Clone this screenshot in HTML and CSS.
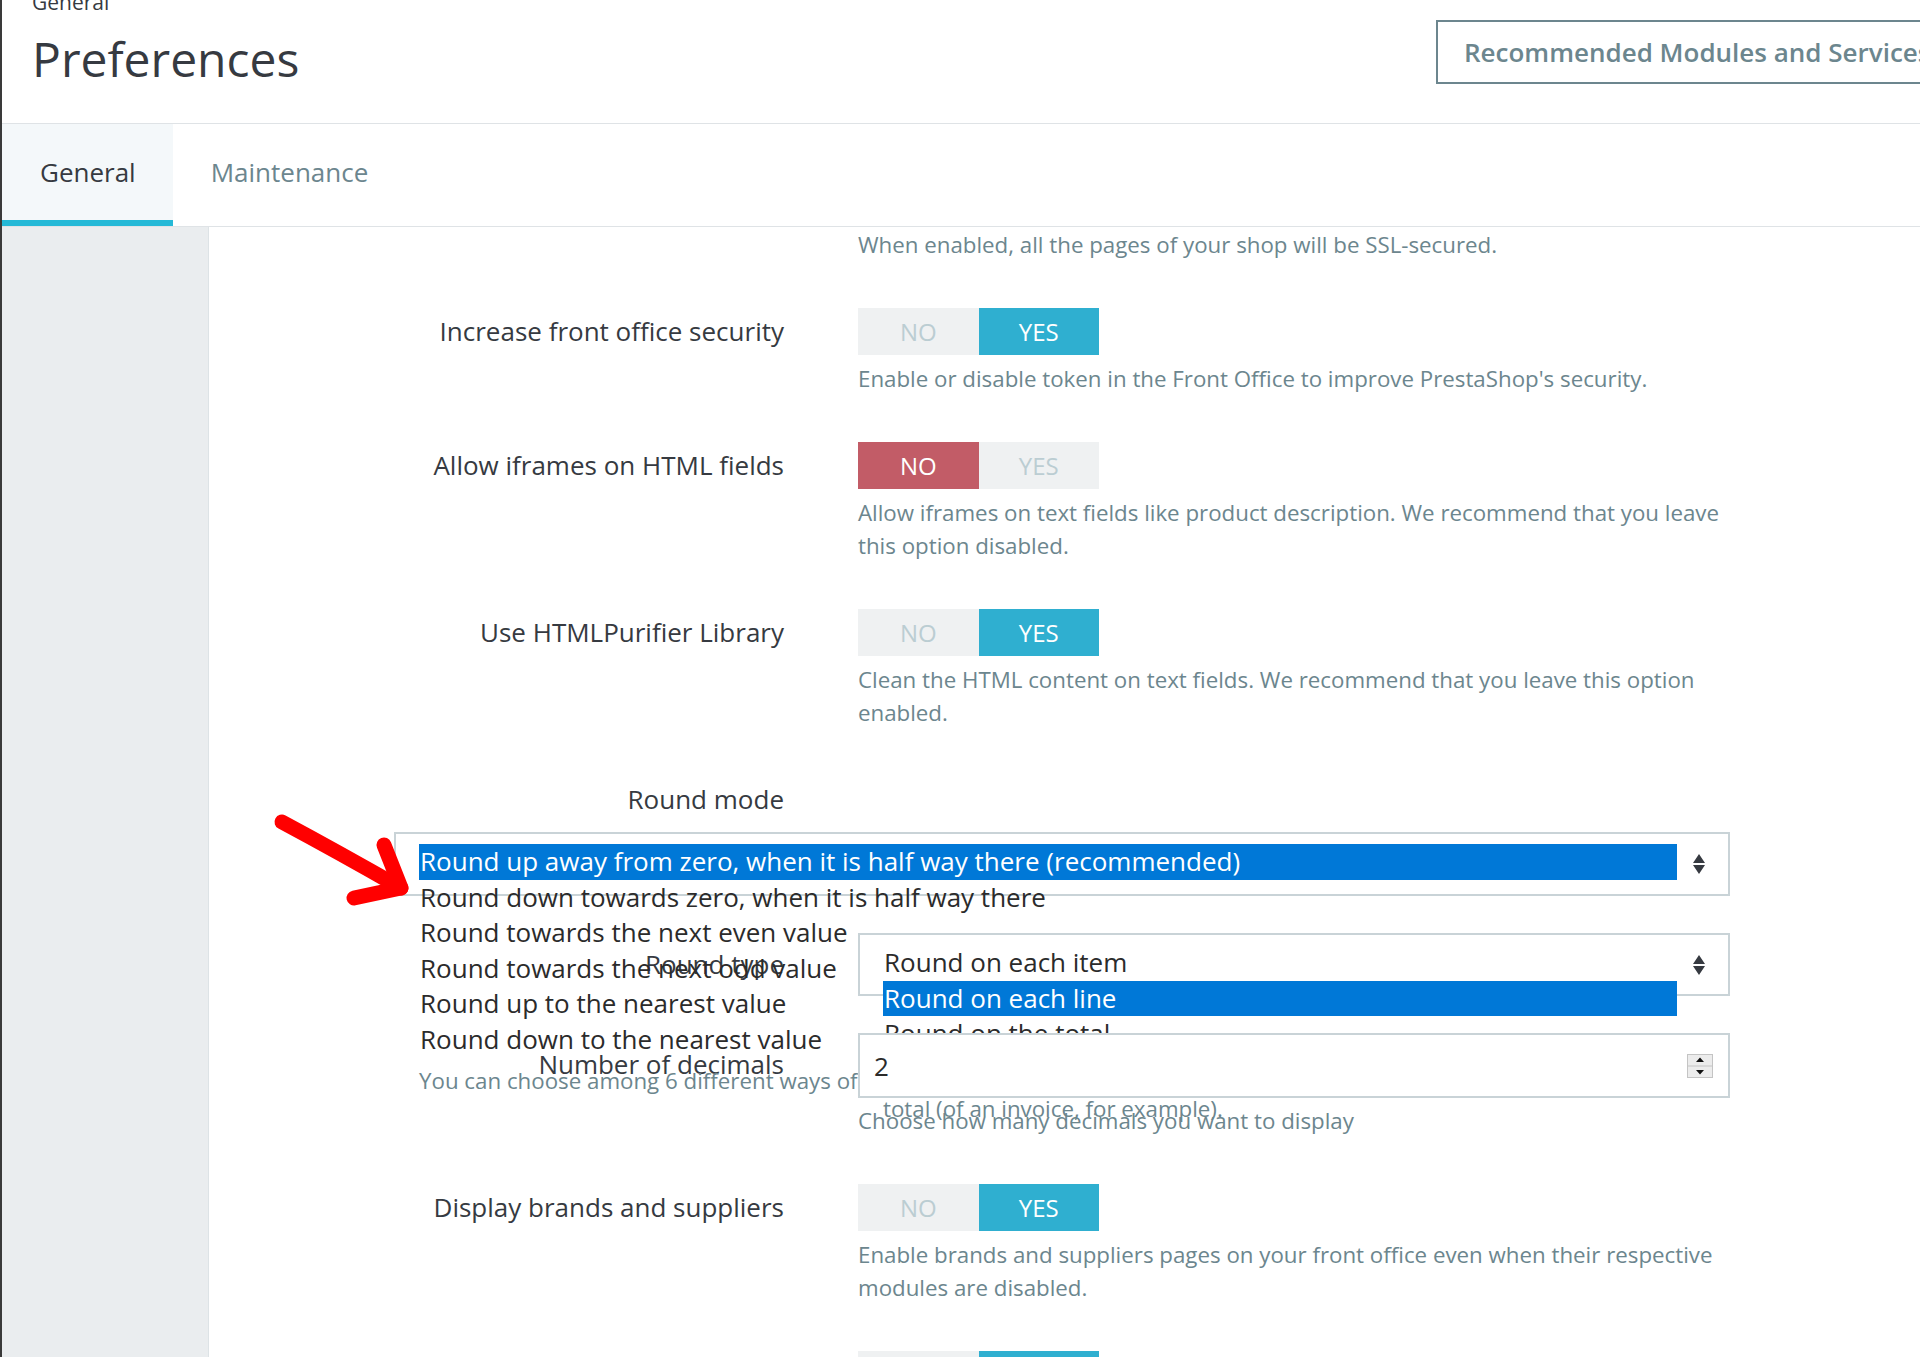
FILE: index.html
```html
<!DOCTYPE html>
<html lang="en">
<head>
  <meta charset="UTF-8" />
  <title>Preferences • General</title>
  <meta name="viewport" content="width=device-width, initial-scale=1.0" />
  <link rel="stylesheet" href="styles.css">
</head>
<body>

  <div class="page">

    <!-- Page header -->
    <div class="header">
      <div class="title-block">
        <div class="breadcrumb">General</div>
        <h1 class="page-title">Preferences</h1>
      </div>
      <a class="btn-outline" href="#">Recommended Modules and Services</a>
    </div>

    <!-- Tabs -->
    <div class="tabs">
      <a class="tab active" href="#">General</a>
      <a class="tab" href="#">Maintenance</a>
    </div>

    <div class="main">
      <div class="sidebar"></div>

      <div class="panel">

        <div class="form-row first">
          <div class="form-label"></div>
          <div class="form-control">
            <div class="help no-gap">When enabled, all the pages of your shop will be SSL-secured.</div>
          </div>
        </div>

        <div class="form-row">
          <div class="form-label">Increase front office security</div>
          <div class="form-control">
            <div class="switch">
              <span class="off">NO</span>
              <span class="on yes">YES</span>
            </div>
            <div class="help">Enable or disable token in the Front Office to improve PrestaShop's security.</div>
          </div>
        </div>

        <div class="form-row">
          <div class="form-label">Allow iframes on HTML fields</div>
          <div class="form-control">
            <div class="switch">
              <span class="on no">NO</span>
              <span class="off">YES</span>
            </div>
            <div class="help">Allow iframes on text fields like product description. We recommend that you leave this option disabled.</div>
          </div>
        </div>

        <div class="form-row">
          <div class="form-label">Use HTMLPurifier Library</div>
          <div class="form-control">
            <div class="switch">
              <span class="off">NO</span>
              <span class="on yes">YES</span>
            </div>
            <div class="help">Clean the HTML content on text fields. We recommend that you leave this option enabled.</div>
          </div>
        </div>

        <!-- Round mode: the select dropped out of its column -->
        <div class="form-row">
          <div class="form-label">Round mode</div>
        </div>
        <div class="select-box round-mode">
          <div class="option-list">
            <div class="option selected">Round up away from zero, when it is half way there (recommended)</div>
            <div class="option">Round down towards zero, when it is half way there</div>
            <div class="option">Round towards the next even value</div>
            <div class="option">Round towards the next odd value</div>
            <div class="option">Round up to the nearest value</div>
            <div class="option">Round down to the nearest value</div>
            <div class="help">You can choose among 6 different ways of rounding prices. Choose the one you prefer.</div>
          </div>
          <svg class="sort-icon" width="12" height="20" viewBox="0 0 12 20">
            <path d="M0 9 L6 0 L12 9 Z M0 11 L6 20 L12 11 Z" fill="#363a41"/>
          </svg>
        </div>

        <div class="form-row compact">
          <div class="form-label boxed">Round type</div>
          <div class="form-control">
            <div class="select-box">
              <div class="option-list">
                <div class="option">Round on each item</div>
                <div class="option selected">Round on each line</div>
                <div class="option">Round on the total</div>
                <div class="help">You can choose when to round prices: either on each item, each line or the<br>total (of an invoice, for example).</div>
              </div>
              <svg class="sort-icon" width="12" height="20" viewBox="0 0 12 20">
                <path d="M0 9 L6 0 L12 9 Z M0 11 L6 20 L12 11 Z" fill="#363a41"/>
              </svg>
            </div>
          </div>
        </div>

        <div class="form-row compact">
          <div class="form-label boxed">Number of decimals</div>
          <div class="form-control">
            <div class="number-input">
              <span>2</span>
              <svg class="spinner" width="26" height="24" viewBox="0 0 26 24">
                <rect x="0.5" y="0.5" width="25" height="23" fill="#ececec" stroke="#c4c4c4"/>
                <line x1="0.5" y1="12" x2="25.5" y2="12" stroke="#c4c4c4"/>
                <path d="M9 8 L13 3.5 L17 8 Z M9 16 L13 20.5 L17 16 Z" fill="#111"/>
              </svg>
            </div>
            <div class="help tight">Choose how many decimals you want to display</div>
          </div>
        </div>

        <div class="form-row">
          <div class="form-label">Display brands and suppliers</div>
          <div class="form-control">
            <div class="switch">
              <span class="off">NO</span>
              <span class="on yes">YES</span>
            </div>
            <div class="help">Enable brands and suppliers pages on your front office even when their respective modules are disabled.</div>
          </div>
        </div>

        <div class="form-row">
          <div class="form-label"></div>
          <div class="form-control">
            <div class="switch">
              <span class="off">NO</span>
              <span class="on yes">YES</span>
            </div>
          </div>
        </div>

      </div>
    </div>
  </div>

  <!-- red annotation arrow -->
  <svg class="annotation" width="160" height="120" viewBox="0 0 160 120">
    <path d="M22 22 Q78 52 141 88" fill="none" stroke="#f00" stroke-width="15" stroke-linecap="round"/>
    <path d="M124 45 L141 88 L94 98" fill="none" stroke="#f00" stroke-width="15" stroke-linecap="round" stroke-linejoin="round"/>
  </svg>

</body>
</html>
```

FILE: styles.css
```css
body {
  font-family: "Open Sans", "Noto Sans", sans-serif;
  background: #fff;
  margin: 0;
  padding: 0;
  overflow: hidden;
  color: #363a41;
}
.page {
  border-left: 2px solid #3a3a3a;
  height: 1357px;
  overflow: hidden;
}
a {
  text-decoration: none;
}

/* Header */
.header {
  display: flex;
  align-items: flex-start;
  height: 123px;
  border-bottom: 1px solid #dfe3e6;
  padding-left: 30px;
  overflow: hidden;
}
.title-block {
  flex: 0 0 1404px;
}
.breadcrumb {
  margin-top: -10px;
  font-size: 21px;
  line-height: 24px;
}
.page-title {
  margin: 17px 0 0;
  font-size: 48px;
  font-weight: 400;
  line-height: 56px;
  color: #363a41;
}
.btn-outline {
  flex-shrink: 0;
  margin-top: 20px;
  border: 2px solid #6c868e;
  padding: 0 26px;
  line-height: 60px;
  font-size: 26px;
  font-weight: 600;
  color: #6c868e;
  white-space: nowrap;
}

/* Tabs */
.tabs {
  display: flex;
  height: 102px;
  border-bottom: 1px solid #dfe3e6;
}
.tab {
  padding: 0 37px 0 38px;
  font-size: 26px;
  line-height: 96px;
  color: #6c868e;
  border-bottom: 6px solid transparent;
}
.tab.active {
  background: #f4f8fa;
  color: #363a41;
  border-bottom-color: #25b9d7;
}

/* Body */
.main {
  display: flex;
  height: 1130px;
}
.sidebar {
  width: 206px;
  flex-shrink: 0;
  background: #eaedef;
}
.panel {
  flex: 1;
  background: #fff;
  box-shadow: inset 1px 0 0 #dde3e6;
}
.form-row {
  display: flex;
  margin-top: 47px;
}
.form-row.first {
  margin-top: 1px;
}
.form-row.compact {
  margin-top: 37px;
}
.form-label {
  width: 576px;
  flex-shrink: 0;
  text-align: right;
  font-size: 26px;
  line-height: 47px;
  color: #363a41;
}
.form-label.boxed {
  margin-top: 8px;
}
.form-control {
  margin-left: 74px;
  width: 872px;
}

/* Yes / no switch */
.switch {
  display: flex;
  width: 241px;
  height: 47px;
}
.switch span {
  flex: 1;
  text-align: center;
  font-size: 24px;
  line-height: 47px;
}
.switch .off {
  background: #eff1f2;
  color: #bbcdd2;
}
.switch .yes {
  background: #2fafd0;
  color: #fff;
}
.switch .no {
  background: #c25c67;
  color: #fff;
}
.help {
  margin-top: 7px;
  font-size: 22.3px;
  line-height: 33px;
  color: #6c868e;
}
.help.no-gap {
  margin-top: 0;
}
.help.tight {
  margin-top: 6px;
}

/* Selects (rendered open) */
.select-box {
  position: relative;
  box-sizing: border-box;
  height: 63px;
  border: 2px solid #c9d3d7;
  background: #fff;
  display: flex;
  align-items: center;
  justify-content: flex-end;
  padding-right: 23px;
}
.select-box.round-mode {
  margin: 9px 0 0 186px;
  width: 1336px;
  height: 64px;
}
.option-list {
  position: absolute;
  top: 10px;
  left: 23px;
  right: 51px;
  z-index: 1;
}
.option {
  padding-left: 1px;
  font-size: 26px;
  line-height: 35.5px;
  color: #2b2b2b;
  white-space: nowrap;
}
.option.selected {
  background: #0078d7;
  color: #fff;
}
.option-list .help {
  white-space: nowrap;
}

/* Number input */
.number-input {
  position: relative;
  z-index: 2;
  box-sizing: border-box;
  height: 65px;
  border: 2px solid #c9d3d7;
  background: #fff;
  display: flex;
  align-items: center;
  justify-content: space-between;
  padding: 0 15px 0 14px;
  font-size: 26px;
  color: #2b2b2b;
}

.annotation {
  position: absolute;
  left: 260px;
  top: 800px;
}
```
